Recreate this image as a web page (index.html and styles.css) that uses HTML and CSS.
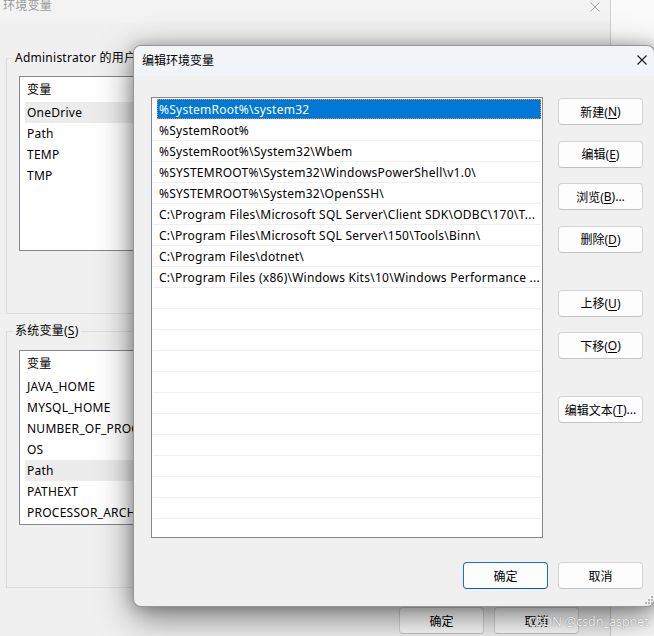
FILE: index.html
```html
<!DOCTYPE html>
<html lang="zh-CN">
<head>
<meta charset="utf-8">
<title>编辑环境变量</title>
<link rel="stylesheet" href="styles.css">
</head>
<body>
<div class="screen">
  <div class="bgwin">
    <div class="bg-title">
      <span class="bg-title-text">环境变量</span>
      <svg class="bg-close" width="10" height="10" viewBox="0 0 10 10"><path d="M0.5 0.5L9.5 9.5M9.5 0.5L0.5 9.5" stroke="#a6a6a6" stroke-width="1" fill="none"/></svg>
    </div>
    <div class="group">
      <div class="group-label">Administrator 的用户变量(<u>U</u>)</div>
      <div class="lv">
        <div class="lv-head">变量</div>
        <div class="lv-row hl">OneDrive</div>
        <div class="lv-row">Path</div>
        <div class="lv-row">TEMP</div>
        <div class="lv-row">TMP</div>
      </div>
    </div>
    <div class="group g2">
      <div class="group-label">系统变量(<u>S</u>)</div>
      <div class="lv">
        <div class="lv-head">变量</div>
        <div class="lv-row">JAVA_HOME</div>
        <div class="lv-row">MYSQL_HOME</div>
        <div class="lv-row">NUMBER_OF_PROCESSORS</div>
        <div class="lv-row">OS</div>
        <div class="lv-row hl">Path</div>
        <div class="lv-row">PATHEXT</div>
        <div class="lv-row">PROCESSOR_ARCHITECTURE</div>
      </div>
    </div>
    <div class="bg-buttons">
      <div class="btn bg-btn">确定</div>
      <div class="btn bg-btn">取消</div>
    </div>
  </div>
  <div class="other"></div>

  <div class="dialog">
    <div class="dlg-title">
      <span>编辑环境变量</span>
      <svg class="dlg-close" width="10" height="10" viewBox="0 0 10 10"><path d="M0.5 0.5L9.5 9.5M9.5 0.5L0.5 9.5" stroke="#1a1a1a" stroke-width="1.1" fill="none"/></svg>
    </div>
    <div class="dlg-body">
      <div class="dlg-main">
        <div class="pathlist">
          <div class="prow sel"><div class="pcell">%SystemRoot%\system32</div></div>
          <div class="prow"><div class="pcell">%SystemRoot%</div></div>
          <div class="prow"><div class="pcell">%SystemRoot%\System32\Wbem</div></div>
          <div class="prow"><div class="pcell">%SYSTEMROOT%\System32\WindowsPowerShell\v1.0\</div></div>
          <div class="prow"><div class="pcell">%SYSTEMROOT%\System32\OpenSSH\</div></div>
          <div class="prow"><div class="pcell">C:\Program Files\Microsoft SQL Server\Client SDK\ODBC\170\T...</div></div>
          <div class="prow"><div class="pcell">C:\Program Files\Microsoft SQL Server\150\Tools\Binn\</div></div>
          <div class="prow"><div class="pcell">C:\Program Files\dotnet\</div></div>
          <div class="prow"><div class="pcell">C:\Program Files (x86)\Windows Kits\10\Windows Performance ...</div></div>
          <div class="prow"><div class="pcell"></div></div>
          <div class="prow"><div class="pcell"></div></div>
          <div class="prow"><div class="pcell"></div></div>
          <div class="prow"><div class="pcell"></div></div>
          <div class="prow"><div class="pcell"></div></div>
          <div class="prow"><div class="pcell"></div></div>
          <div class="prow"><div class="pcell"></div></div>
          <div class="prow"><div class="pcell"></div></div>
          <div class="prow"><div class="pcell"></div></div>
          <div class="prow"><div class="pcell"></div></div>
          <div class="prow"><div class="pcell"></div></div>
          <div class="prow last"><div class="pcell"></div></div>
        </div>
        <div class="side">
          <div class="btn">新建(<u>N</u>)</div>
          <div class="btn">编辑(<u>E</u>)</div>
          <div class="btn">浏览(<u>B</u>)...</div>
          <div class="btn">删除(<u>D</u>)</div>
          <div class="btn sp">上移(<u>U</u>)</div>
          <div class="btn">下移(<u>O</u>)</div>
          <div class="btn sp">编辑文本(<u>T</u>)...</div>
        </div>
      </div>
      <div class="dlg-foot">
        <div class="btn primary">确定</div>
        <div class="btn">取消</div>
      </div>
    </div>
    <svg class="grip" width="8" height="8" viewBox="0 0 8 8">
      <rect x="6" y="0" width="2" height="2" fill="#b4b4b4"/>
      <rect x="3" y="3" width="2" height="2" fill="#b4b4b4"/>
      <rect x="6" y="3" width="2" height="2" fill="#b4b4b4"/>
      <rect x="0" y="6" width="2" height="2" fill="#b4b4b4"/>
      <rect x="3" y="6" width="2" height="2" fill="#b4b4b4"/>
      <rect x="6" y="6" width="2" height="2" fill="#b4b4b4"/>
    </svg>
  </div>

  <div class="watermark">CSDN @csdn_aspnet</div>
</div>
</body>
</html>
```

FILE: styles.css
```css
html, body {
  margin: 0;
  padding: 0;
}
body {
  font-family: "Noto Sans", "Noto Sans CJK SC", sans-serif;
  font-size: 12px;
  letter-spacing: 0.25px;
  color: #000;
  background: #f0f0f0;
}
u {
  text-decoration: underline;
  text-underline-offset: 2px;
}
.screen {
  width: 654px;
  height: 636px;
  position: relative;
  overflow: hidden;
  display: flex;
  background: #f0f0f0;
}

/* background window */
.bgwin {
  width: 610px;
  flex: none;
  background: #f0f0f0;
}
.bg-title {
  height: 22px;
  background: #f3f3f3;
  display: flex;
  justify-content: space-between;
  align-items: flex-start;
}
.bg-title-text {
  color: #9a9a9a;
  margin: -2px 0 0 3px;
  line-height: 16px;
}
.bg-close {
  margin: 2px 10px 0 0;
}
.other {
  flex: 1;
  background: #fafafa;
  border-left: 1px solid #cfcfcf;
}
.group {
  margin: 36px 8px 0 6px;
  border: 1px solid #dcdcdc;
  padding-bottom: 62px;
}
.g2 {
  margin-top: 17px;
}
.group-label {
  width: fit-content;
  margin: -10px 0 0 6px;
  padding: 0 2px;
  height: 17px;
  line-height: 17px;
  background: #f0f0f0;
  white-space: nowrap;
}
.lv {
  margin: 10px 12px 0 12px;
  height: 175px;
  box-sizing: border-box;
  border: 1px solid #828790;
  background: #fff;
  overflow: hidden;
}
.g2 .lv {
  margin-top: 11px;
}
.lv-head {
  height: 25px;
  line-height: 25px;
  padding-left: 7px;
}
.lv-row {
  height: 21px;
  line-height: 21px;
  margin-left: 5px;
  padding-left: 2px;
  white-space: nowrap;
}
.lv-row.hl {
  background: #ececec;
}
.bg-buttons {
  display: flex;
  justify-content: flex-end;
  gap: 10px;
  margin-top: 19px;
  padding-right: 31px;
}
.bg-btn {
  width: 84px;
}

/* buttons */
.btn {
  box-sizing: border-box;
  width: 85px;
  height: 27px;
  border: 1px solid #d3d3d3;
  border-bottom-color: #c2c2c2;
  border-radius: 4px;
  background: #fdfdfd;
  display: flex;
  align-items: center;
  justify-content: center;
  white-space: nowrap;
  flex: none;
  letter-spacing: 0;
}
.btn.primary {
  border-color: #1a6fc6;
  border-bottom-color: #0b5aa8;
}

/* dialog */
.dialog {
  position: absolute;
  left: 133px;
  top: 45px;
  width: 522px;
  height: 562px;
  box-sizing: border-box;
  border: 1px solid rgba(0, 0, 0, 0.38);
  border-radius: 8px;
  background: #f0f0f0;
  box-shadow: 0 10px 34px rgba(0, 0, 0, 0.5), 0 0 14px rgba(0, 0, 0, 0.22);
  overflow: hidden;
}
.dlg-title {
  height: 30px;
  background: #f1f5fa;
  display: flex;
  align-items: center;
  justify-content: space-between;
  padding-left: 8px;
  padding-bottom: 2px;
  box-sizing: border-box;
  letter-spacing: 0;
}
.dlg-close {
  margin-right: 7px;
}
.dlg-body {
  padding: 21px 0 0 17px;
}
.dlg-main {
  display: flex;
}
.pathlist {
  width: 392px;
  height: 441px;
  box-sizing: border-box;
  border: 1px solid #828790;
  background: #fff;
  padding-top: 1px;
  overflow: hidden;
  flex: none;
}
.prow {
  height: 21px;
  box-sizing: border-box;
  border-bottom: 1px solid #efefef;
  margin: 0 1px;
  display: flex;
}
.prow.last {
  border-bottom: none;
}
.pcell {
  flex: 1;
  min-width: 0;
  margin-left: 4px;
  padding: 2px 0 0 2px;
  height: 20px;
  box-sizing: border-box;
  line-height: 18px;
  white-space: nowrap;
  overflow: hidden;
}
.prow.sel .pcell {
  background: #0078d7;
  color: #fff;
  outline: 1px dotted #d89040;
  outline-offset: -1px;
}
.side {
  margin-left: 15px;
  width: 85px;
  padding-top: 1px;
  display: flex;
  flex-direction: column;
  gap: 15.5px;
}
.side .sp {
  margin-top: 21.5px;
}
.dlg-foot {
  display: flex;
  justify-content: flex-end;
  gap: 10px;
  margin-top: 24px;
  padding-right: 11px;
}
.grip {
  position: absolute;
  right: 1px;
  bottom: 2px;
}
.watermark {
  position: absolute;
  left: 528px;
  top: 612px;
  font-size: 13px;
  letter-spacing: -0.3px;
  line-height: 18px;
  color: rgba(255, 255, 255, 0.88);
  text-shadow: 0 0 1px rgba(0, 0, 0, 0.55);
  white-space: nowrap;
}
```
